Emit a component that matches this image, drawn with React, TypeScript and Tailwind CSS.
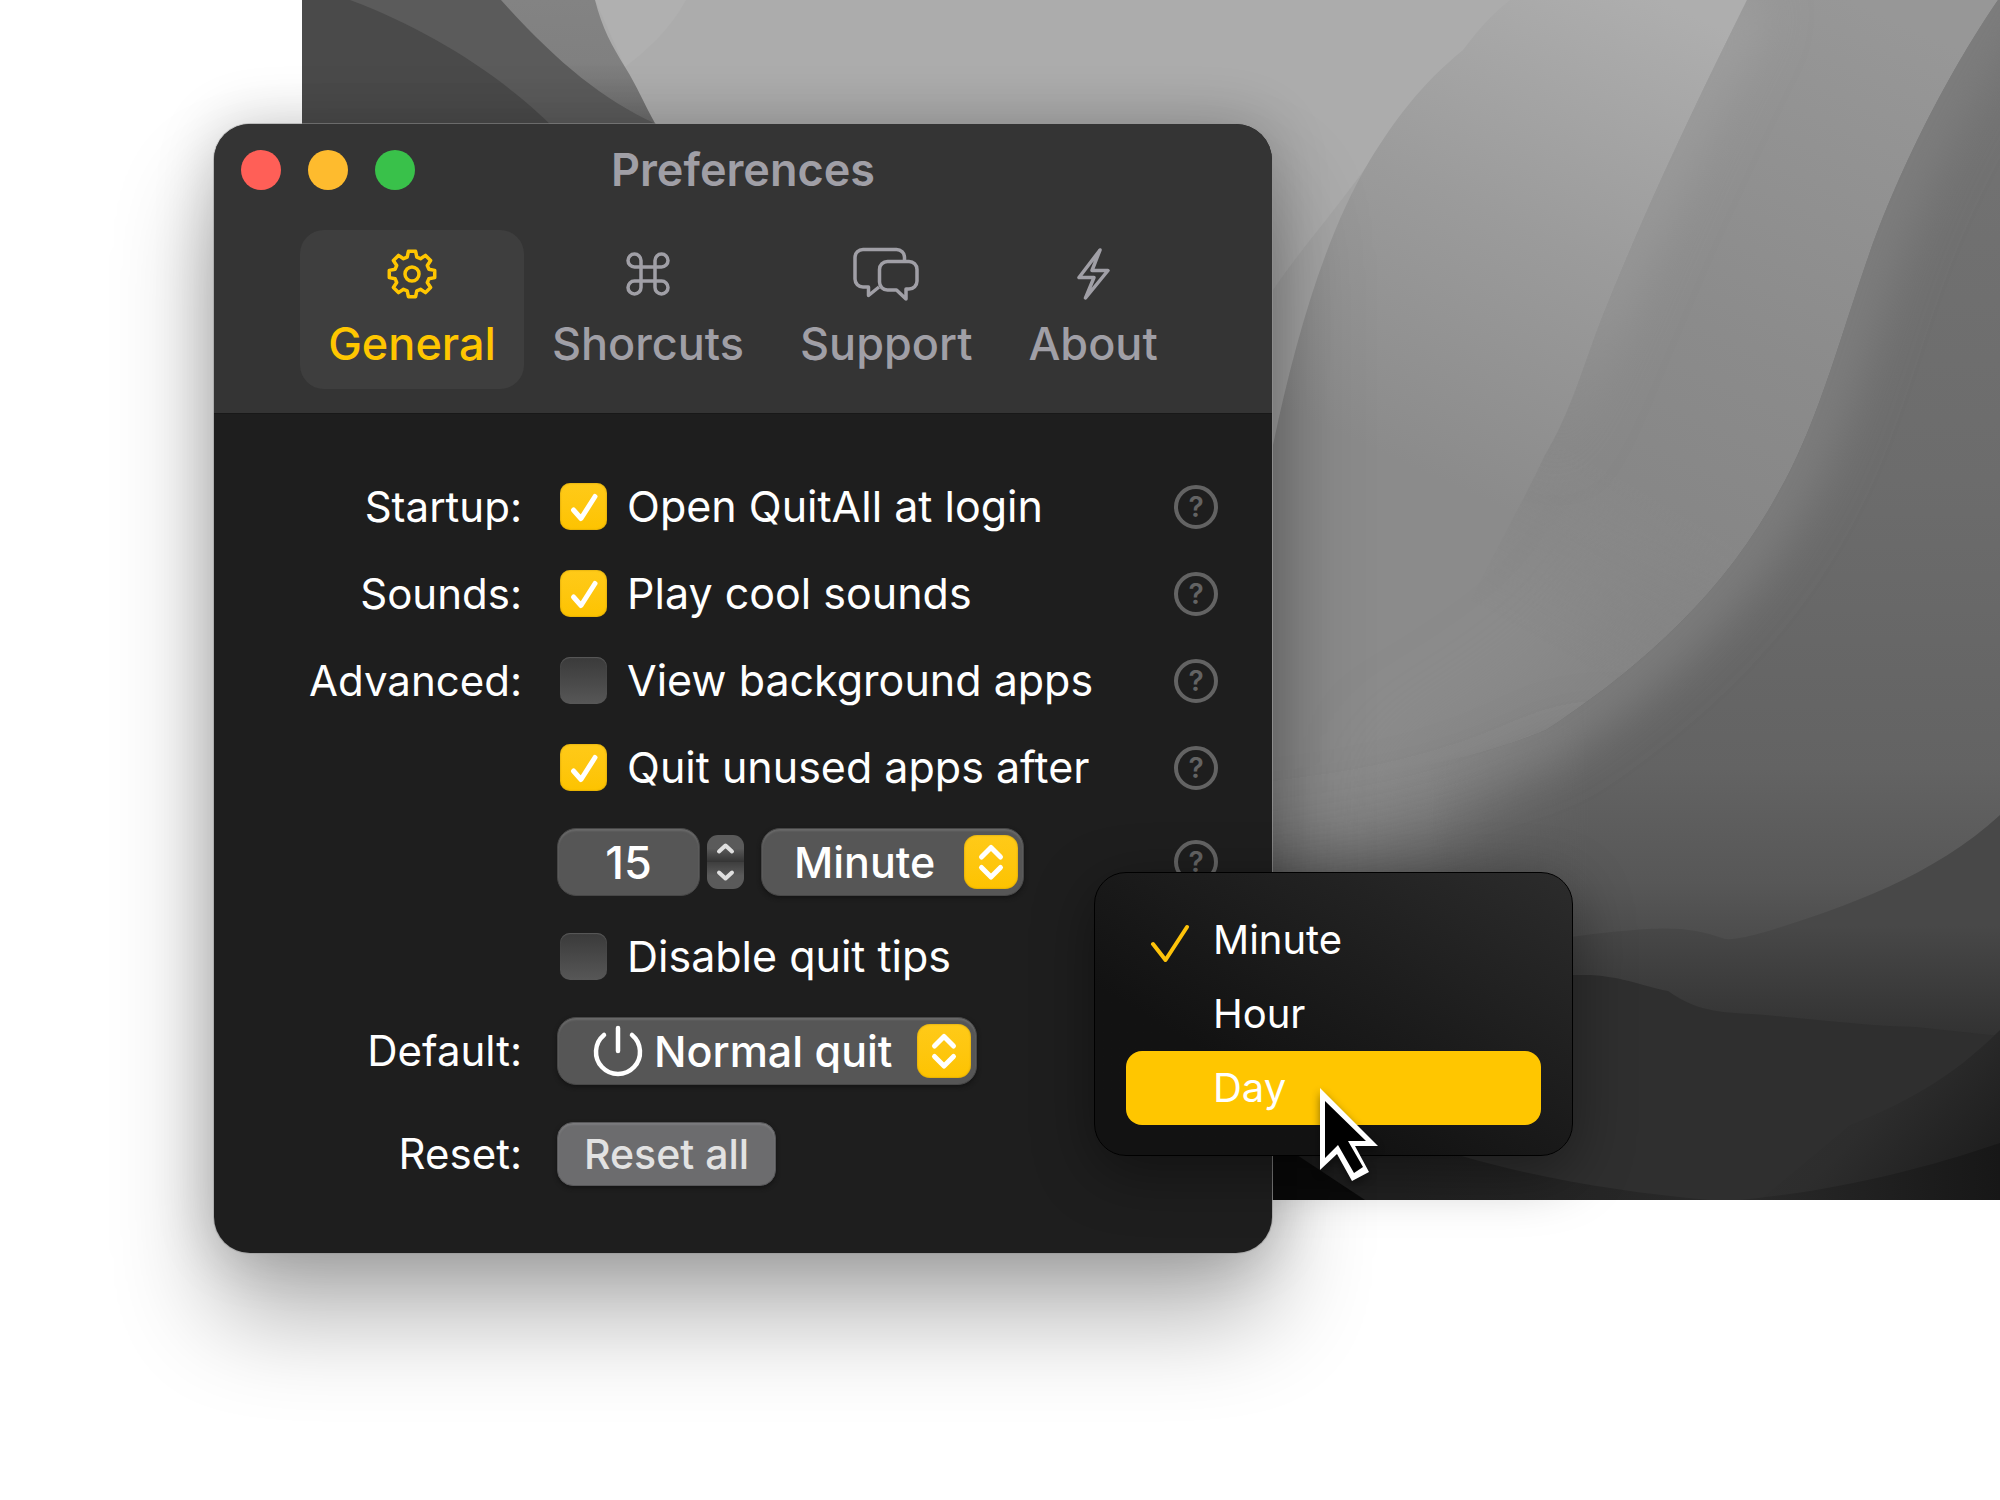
import React, { useState } from 'react';
import { clsx } from 'clsx';

const UNITS = ['Minute', 'Hour', 'Day'];

/** Outline of the eight-toothed gear */
function gearPath(center: number, outer: number, inner: number): string {
  const points: string[] = [];
  const steps: [number, number][] = [
    [-16, inner],
    [-9, outer],
    [9, outer],
    [16, inner],
  ];
  for (let tooth = 0; tooth < 8; tooth++) {
    for (const [offset, radius] of steps) {
      const angle = ((tooth * 45 + offset - 90) * Math.PI) / 180;
      points.push(`${(center + radius * Math.cos(angle)).toFixed(2)} ${(center + radius * Math.sin(angle)).toFixed(2)}`);
    }
  }
  return `M${points.join('L')}Z`;
}

const GearIcon = () => (
  <svg width="50" height="50" viewBox="0 0 50 50" fill="none" stroke="currentColor" strokeWidth="3.5" strokeLinejoin="round">
    <path d={gearPath(25, 23, 17.5)} />
    <circle cx="25" cy="25" r="7" />
  </svg>
);

const CommandIcon = () => (
  <svg width="44" height="44" viewBox="0 0 44 44" fill="none" stroke="currentColor" strokeWidth="3.5">
    <path d="M29 8.5V35.5A6.5 6.5 0 1 0 35.5 29H8.5A6.5 6.5 0 1 0 15 35.5V8.5A6.5 6.5 0 1 0 8.5 15H35.5A6.5 6.5 0 1 0 29 8.5Z" />
  </svg>
);

const ChatIcon = () => (
  <svg
    width="66"
    height="56"
    viewBox="0 0 66 56"
    fill="none"
    stroke="currentColor"
    strokeWidth="3.5"
    strokeLinejoin="round"
  >
    <path d="M51.5 14V11.5a8 8 0 0 0-8-8H10a8 8 0 0 0-8 8V33a8 8 0 0 0 8 8h5.5v8.5L26 41" />
    <path d="M34.5 15.5H56a8 8 0 0 1 8 8V35a8 8 0 0 1-8 8h-3v10L43.5 44h-9a8 8 0 0 1-8-8V23.5a8 8 0 0 1 8-8Z" />
  </svg>
);

const BoltIcon = () => (
  <svg width="33" height="52" viewBox="0 0 33 52" fill="none" stroke="currentColor" strokeWidth="3.5" strokeLinejoin="round">
    <path d="M23 2 2 29.5h15L8.5 50 31 22.5H15Z" />
  </svg>
);

const TABS = [
  { name: 'General', Icon: GearIcon },
  { name: 'Shorcuts', Icon: CommandIcon },
  { name: 'Support', Icon: ChatIcon },
  { name: 'About', Icon: BoltIcon },
];

function Wallpaper() {
  return (
    <svg
      aria-hidden="true"
      className="absolute top-0 right-0 left-[302px] h-[1200px] w-[calc(100%-302px)]"
      viewBox="302 0 1698 1200"
      preserveAspectRatio="xMinYMin slice"
    >
      <defs>
        <linearGradient id="slope" gradientUnits="userSpaceOnUse" x1="1660" y1="0" x2="1440" y2="480">
          <stop offset="0" stopColor="#aeaeae" />
          <stop offset="0.5" stopColor="#9b9b9b" />
          <stop offset="1" stopColor="#8b8b8b" />
        </linearGradient>
        <linearGradient id="band" gradientUnits="userSpaceOnUse" x1="1850" y1="0" x2="1560" y2="650">
          <stop offset="0" stopColor="#979797" />
          <stop offset="0.5" stopColor="#8b8b8b" />
          <stop offset="0.8" stopColor="#868686" />
          <stop offset="1" stopColor="#848484" stopOpacity="0.7" />
        </linearGradient>
        <linearGradient id="bandGlow" gradientUnits="userSpaceOnUse" x1="0" y1="0" x2="0" y2="500">
          <stop offset="0" stopColor="#a2a2a2" />
          <stop offset="0.6" stopColor="#989898" />
          <stop offset="1" stopColor="#8a8a8a" stopOpacity="0" />
        </linearGradient>
        <linearGradient id="bandFade" gradientUnits="userSpaceOnUse" x1="1560" y1="440" x2="1470" y2="600">
          <stop offset="0" stopColor="white" />
          <stop offset="1" stopColor="black" />
        </linearGradient>
        <mask id="bandMask" maskUnits="userSpaceOnUse" x="1270" y="0" width="730" height="1200">
          <rect x="1270" width="730" height="1200" fill="url(#bandFade)" />
        </mask>
        <linearGradient id="valley" gradientUnits="userSpaceOnUse" x1="0" y1="0" x2="0" y2="960">
          <stop offset="0" stopColor="#747474" />
          <stop offset="0.5" stopColor="#6c6c6c" />
          <stop offset="0.8" stopColor="#636363" />
          <stop offset="0.92" stopColor="#575757" />
          <stop offset="1" stopColor="#484848" />
        </linearGradient>
        <linearGradient id="valleyFade" gradientUnits="userSpaceOnUse" x1="1430" y1="0" x2="1590" y2="0">
          <stop offset="0" stopColor="black" />
          <stop offset="1" stopColor="white" />
        </linearGradient>
        <mask id="valleyMask" maskUnits="userSpaceOnUse" x="1270" y="0" width="730" height="1200">
          <rect x="1270" width="730" height="1200" fill="url(#valleyFade)" />
        </mask>
        <linearGradient id="ridge" gradientUnits="userSpaceOnUse" x1="0" y1="815" x2="0" y2="1036">
          <stop offset="0" stopColor="#484848" />
          <stop offset="0.5" stopColor="#484848" />
          <stop offset="1" stopColor="#323232" />
        </linearGradient>
        <linearGradient id="corner" gradientUnits="userSpaceOnUse" x1="1850" y1="1050" x2="2000" y2="1190">
          <stop offset="0" stopColor="#2f2f2f" />
          <stop offset="0.3" stopColor="#2d2d2d" />
          <stop offset="1" stopColor="#1a1a1a" />
        </linearGradient>
        <linearGradient id="footLeft" gradientUnits="userSpaceOnUse" x1="1400" y1="0" x2="1720" y2="0">
          <stop offset="0" stopColor="#212121" />
          <stop offset="1" stopColor="#292929" />
        </linearGradient>
        <linearGradient id="footRight" gradientUnits="userSpaceOnUse" x1="1740" y1="0" x2="2000" y2="0">
          <stop offset="0" stopColor="#2a2a2a" />
          <stop offset="1" stopColor="#171717" />
        </linearGradient>
        <linearGradient id="fold" gradientUnits="userSpaceOnUse" x1="0" y1="0" x2="0" y2="125">
          <stop offset="0" stopColor="#838383" />
          <stop offset="0.5" stopColor="#808080" />
          <stop offset="1" stopColor="#6a6a6a" />
        </linearGradient>
        <filter id="soft" filterUnits="userSpaceOnUse" x="1100" y="-200" width="1100" height="1400">
          <feGaussianBlur stdDeviation="24" />
        </filter>
        <filter id="haze" filterUnits="userSpaceOnUse" x="1000" y="400" width="1200" height="900">
          <feGaussianBlur stdDeviation="44" />
        </filter>
        <clipPath id="bandClip">
          <path d="M1747 0C1715 65 1655 185 1603 315C1585 360 1572 410 1545 455C1500 550 1440 640 1390 800V1200H2000V0Z" />
        </clipPath>
        <clipPath id="valleyClip">
          <path d="M1998 0C1960 55 1900 160 1862 275C1838 345 1815 430 1777 495C1720 600 1630 675 1546 730C1480 757 1400 775 1273 790V1200H2000V0Z" />
        </clipPath>
      </defs>

      <rect x="302" width="1698" height="1200" fill="#acacac" />
      <path d="M595 0H686C670 30 645 52 625 67Z" fill="#b0b0b0" />
      <path d="M302 0H595C602 28 612 46 625 67C638 88 643 102 656 125H302Z" fill="url(#fold)" />
      <path d="M302 0H501C555 60 600 98 656 124H302Z" fill="#5b5b5b" />
      <path d="M302 0H350C430 30 500 75 552 126H302Z" fill="#4a4a4a" />

      {/* long light slope, lit from the upper right */}
      <path d="M1374 156C1340 205 1300 250 1273 290V480Z" fill="#a5a5a5" />
      <path d="M1510 0C1485 20 1475 35 1463 50C1420 85 1395 120 1370 160C1325 235 1295 340 1273 445V1200H2000V0Z" fill="url(#slope)" />

      <path d="M1640 560C1600 650 1520 700 1400 770V1000H2000V500Z" fill="#848484" filter="url(#haze)" />
      <g mask="url(#bandMask)">
        <g clipPath="url(#bandClip)">
          <rect x="1270" width="730" height="1200" fill="url(#band)" />
          <path
            d="M1747 0C1715 65 1655 185 1603 315C1585 360 1572 410 1545 455"
            fill="none"
            stroke="url(#bandGlow)"
            strokeWidth="40"
            filter="url(#soft)"
          />
        </g>
      </g>

      {/* the valley melts into the slope on its left side */}
      <path d="M1200 870C1400 860 1520 820 1620 760V1200H1200Z" fill="#565656" filter="url(#haze)" />
      <g mask="url(#valleyMask)">
        <g clipPath="url(#valleyClip)">
          <rect x="1270" width="730" height="960" fill="url(#valley)" />
          <path
            d="M2060 -100C1960 55 1900 160 1862 275C1838 345 1815 430 1777 495C1720 600 1630 675 1546 730C1480 757 1400 775 1273 790"
            fill="none"
            stroke="#7e7e7e"
            strokeWidth="60"
            filter="url(#soft)"
          />
        </g>
      </g>

      {/* dark hills along the bottom edge */}
      <path d="M2000 815C1930 880 1830 912 1765 932C1750 936 1735 940 1725 939C1685 925 1660 926 1570 937L1273 960V1200H2000Z" fill="url(#ridge)" />
      <path d="M1273 975H1590C1625 977 1645 987 1668 991C1700 1014 1725 1012 1765 1015C1820 1020 1870 1026 1915 1027L2000 1036V1200H1273Z" fill="#2f2f2f" />
      <path d="M2000 1030C1950 1080 1900 1105 1850 1125L1760 1200H2000Z" fill="url(#corner)" />
      <path d="M1400 1136C1500 1172 1600 1190 1710 1200H1273V1100Z" fill="url(#footLeft)" />
      <path d="M2000 1143C1920 1170 1840 1190 1740 1200H2000Z" fill="url(#footRight)" />
      <path d="M1273 1140L1300 1157L1365 1200H1273Z" fill="#0b0b0b" />
    </svg>
  );
}

interface OptionProps {
  label: string;
  defaultChecked?: boolean;
}

function CheckOption({ label, defaultChecked }: OptionProps) {
  return (
    <label className="flex h-[47px] items-center gap-5 px-[3px] text-[43px] leading-none whitespace-nowrap">
      <span className="grid">
        <input
          type="checkbox"
          defaultChecked={defaultChecked}
          className="peer col-start-1 row-start-1 size-[47px] appearance-none rounded-[10px] bg-linear-to-b from-[#3a3a3a] to-[#575757] shadow-[inset_0_1px_1px_#5a5a5a] checked:from-[#ffca18] checked:to-[#fdc300] checked:shadow-[inset_0_0_2px_#b88f08]"
        />
        <svg
          className="pointer-events-none invisible col-start-1 row-start-1 peer-checked:visible"
          width="47"
          height="47"
          viewBox="0 0 47 47"
          fill="none"
          stroke="white"
          strokeWidth="5"
          strokeLinecap="round"
          strokeLinejoin="round"
        >
          <path d="M13.5 27 21 35.5 35 13.5" />
        </svg>
      </span>
      {label}
    </label>
  );
}

const HelpButton = () => (
  <button
    type="button"
    aria-label="Help"
    className="flex size-11 shrink-0 items-center justify-center rounded-full border-4 border-[#636363] text-[28px] leading-none font-semibold text-[#636363]"
  >
    ?
  </button>
);

interface RowProps {
  label?: string;
  htmlFor?: string;
  help?: boolean;
  children: React.ReactNode;
}

function Row({ label, htmlFor, help, children }: RowProps) {
  return (
    <div className="flex items-center gap-[35px]">
      <div className="w-[308px] text-right text-[42px] leading-none">
        {label && (htmlFor ? <label htmlFor={htmlFor}>{label}</label> : <span>{label}</span>)}
      </div>
      <div className="flex flex-1 items-center">{children}</div>
      {help && <HelpButton />}
    </div>
  );
}

interface PopupProps {
  id: string;
  name: string;
  options: string[];
  value: string;
  onChange: (value: string) => void;
  className: string;
  icon?: React.ReactNode;
}

function PopupSelect({ id, name, options, value, onChange, className, icon }: PopupProps) {
  return (
    <div className="grid items-center">
      <select
        id={id}
        aria-label={name}
        value={value}
        onChange={(e) => onChange(e.target.value)}
        className={clsx(
          'col-start-1 row-start-1 h-[68px] appearance-none rounded-[19px] border border-[#474747] bg-[#565656] text-[43px] leading-none font-medium shadow-[inset_0_2px_2px_#6a6a6a,0_2px_4px_#141414]',
          className
        )}
      >
        {options.map((o) => (
          <option key={o}>{o}</option>
        ))}
      </select>
      {icon && <span className="pointer-events-none col-start-1 row-start-1 ml-9 justify-self-start">{icon}</span>}
      <span className="pointer-events-none col-start-1 row-start-1 mr-1.5 justify-self-end rounded-[13px] bg-linear-to-b from-[#ffca18] to-[#fdc300] shadow-[inset_0_0_2px_#b88f08]">
        <svg
          width="54"
          height="54"
          viewBox="0 0 54 54"
          fill="none"
          stroke="white"
          strokeWidth="5"
          strokeLinecap="round"
          strokeLinejoin="round"
        >
          <path d="M17.5 22 27 12.5 36.5 22M17.5 32.5 27 42 36.5 32.5" />
        </svg>
      </span>
    </div>
  );
}

const PowerIcon = () => (
  <svg width="50" height="52" viewBox="0 0 50 52" fill="none" stroke="white" strokeWidth="4.5" strokeLinecap="round">
    <path d="M11 10A22 22 0 1 0 39 10M25 3V26" />
  </svg>
);

function Stepper({ onStep }: { onStep: (delta: number) => void }) {
  return (
    <div className="ml-[7px] flex w-[37px] flex-col overflow-hidden rounded-[11px] text-[#e0e0e0]">
      <button
        type="button"
        aria-label="Increase"
        onClick={() => onStep(1)}
        className="bg-linear-to-b from-[#5a5a5a] from-50% to-[#343434]"
      >
        <svg width="37" height="27" viewBox="0 0 37 27" fill="none" stroke="currentColor" strokeWidth="4" strokeLinecap="round" strokeLinejoin="round">
          <path d="M12 16.5 18.5 10.5 25 16.5" />
        </svg>
      </button>
      <button
        type="button"
        aria-label="Decrease"
        onClick={() => onStep(-1)}
        className="bg-linear-to-b from-[#3e3e3e] to-[#5a5a5a] to-50%"
      >
        <svg width="37" height="27" viewBox="0 0 37 27" fill="none" stroke="currentColor" strokeWidth="4" strokeLinecap="round" strokeLinejoin="round">
          <path d="M12 10.5 18.5 16.5 25 10.5" />
        </svg>
      </button>
    </div>
  );
}

interface MenuProps {
  selected: string;
  onSelect: (unit: string) => void;
}

function UnitMenu({ selected, onSelect }: MenuProps) {
  const [active, setActive] = useState('Day');

  return (
    <ul
      role="listbox"
      aria-label="Unit"
      className="absolute top-[748px] left-[880px] w-[479px] rounded-[32px] border border-black bg-linear-to-tr from-[#121212] from-30% to-[#2c2c2c] px-[31px] py-[30px] shadow-[0_16px_60px_rgba(0,0,0,0.4)]"
    >
      {UNITS.map((unit) => (
        <li key={unit} role="option" aria-selected={unit === selected}>
          <button
            type="button"
            onMouseEnter={() => setActive(unit)}
            onClick={() => onSelect(unit)}
            className={clsx(
              'flex h-[74px] w-full items-center rounded-2xl text-[40px] leading-none',
              active === unit && 'bg-[#ffc600]'
            )}
          >
            <span className="flex w-[87px] justify-center">
              {unit === selected && (
                <svg width="40" height="44" viewBox="0 0 40 44" fill="none" stroke="#fec30a" strokeWidth="4" strokeLinecap="round" strokeLinejoin="round">
                  <path d="M3 26 15.5 42 37 9" />
                </svg>
              )}
            </span>
            {unit}
          </button>
        </li>
      ))}
    </ul>
  );
}

const Cursor = () => (
  <svg
    aria-hidden="true"
    className="pointer-events-none absolute top-[964px] left-[1106px] drop-shadow-[0_4px_4px_rgba(0,0,0,0.45)]"
    width="60"
    height="94"
    viewBox="0 0 60 94"
  >
    <path d="M0 0V82L17 66 32 93 49 84 35 58H58Z" fill="white" />
    <path d="M5 13V70L18 57 34 85 43 79 28 53H46Z" fill="black" />
  </svg>
);

export default function App() {
  const [tab, setTab] = useState('General');
  const [amount, setAmount] = useState('15');
  const [unit, setUnit] = useState('Minute');
  const [action, setAction] = useState('Normal quit');

  return (
    <div className="relative min-h-screen overflow-hidden bg-white pt-[124px] pb-20 pl-[214px] font-[Inter,'Liberation_Sans',sans-serif] text-white">
      <Wallpaper />

      <main className="relative w-[1058px] rounded-[36px] bg-[#1e1e1e] shadow-[0_0_0_1px_rgba(150,150,150,0.5),0_0_60px_rgba(0,0,0,0.2),0_64px_100px_rgba(0,0,0,0.3)]">
        <header className="rounded-t-[36px] border-b border-[#181818] bg-[#343434] pt-[26px] pb-6 text-[#a09fa6]">
          <div className="grid grid-cols-[1fr_auto_1fr] items-center px-[27px]">
            <div className="flex gap-[27px]">
              <button type="button" aria-label="Close" className="size-10 rounded-full bg-[#ff5f57]" />
              <button type="button" aria-label="Minimize" className="size-10 rounded-full bg-[#febb2e]" />
              <button type="button" aria-label="Zoom" className="size-10 rounded-full bg-[#39c14a]" />
            </div>
            <h1 className="text-[45px] leading-10 font-semibold">Preferences</h1>
          </div>

          <nav className="mt-10 flex justify-center">
            {TABS.map(({ name, Icon }) => (
              <button
                key={name}
                type="button"
                onClick={() => setTab(name)}
                className={clsx(
                  'flex flex-col items-center gap-[19px] rounded-3xl px-7 pt-4 pb-[23px]',
                  tab === name && 'bg-[#3e3e3e] text-[#ffc600]'
                )}
              >
                <span className="flex h-14 items-center">
                  <Icon />
                </span>
                <span className="text-[45px] leading-none font-medium">{name}</span>
              </button>
            ))}
          </nav>
        </header>

        <form className="flex flex-col gap-[37px] pt-[69px] pr-[54px] pb-[67px]" onSubmit={(e) => e.preventDefault()}>
          <div className="flex flex-col gap-10">
            <Row label="Startup:" help>
              <CheckOption label="Open QuitAll at login" defaultChecked />
            </Row>
            <Row label="Sounds:" help>
              <CheckOption label="Play cool sounds" defaultChecked />
            </Row>
            <Row label="Advanced:" help>
              <CheckOption label="View background apps" />
            </Row>
            <Row help>
              <CheckOption label="Quit unused apps after" defaultChecked />
            </Row>
          </div>

          <Row help>
            <input
              type="text"
              inputMode="numeric"
              aria-label="Amount"
              value={amount}
              onChange={(e) => setAmount(e.target.value)}
              className="h-[68px] w-[143px] rounded-[19px] border border-[#474747] bg-[#565656] text-center text-[45px] leading-none font-medium shadow-[inset_0_2px_2px_#6a6a6a]"
            />
            <Stepper onStep={(delta) => setAmount(String(Number(amount) + delta))} />
            <div className="ml-[17px]">
              <PopupSelect id="unit" name="Unit" options={UNITS} value={unit} onChange={setUnit} className="w-[263px] pl-8" />
            </div>
          </Row>

          <Row>
            <CheckOption label="Disable quit tips" />
          </Row>

          <Row label="Default:" htmlFor="default-action">
            <PopupSelect
              id="default-action"
              name="Default"
              options={['Normal quit', 'Force quit']}
              value={action}
              onChange={setAction}
              className="w-[420px] pl-24"
              icon={<PowerIcon />}
            />
          </Row>

          <Row label="Reset:">
            <button
              type="button"
              className="h-16 rounded-2xl border border-[#58585a] bg-[#6c6c6e] px-[26px] text-[41px] leading-none font-medium text-[#e2e2e2] shadow-[inset_0_2px_2px_#7c7c7e,0_2px_4px_#141414]"
            >
              Reset all
            </button>
          </Row>
        </form>

        <UnitMenu selected={unit} onSelect={setUnit} />
        <Cursor />
      </main>
    </div>
  );
}
